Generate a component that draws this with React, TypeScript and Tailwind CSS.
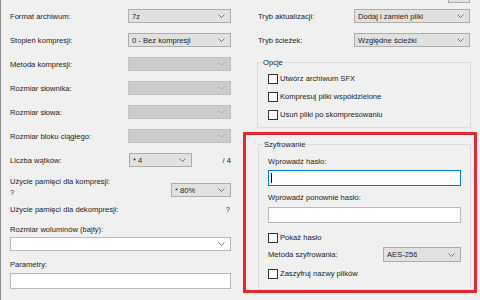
import React from "react";

type Tone = "normal" | "disabled" | "white";

const TONE: Record<Tone, string> = {
  normal: "bg-[#e1e1e1] border-[#adadad]",
  disabled: "bg-[#cccccc] border-[#c4c4c4]",
  white: "bg-white border-[#b9b9b9]",
};

function Chevron({ dim }: { dim?: boolean }) {
  return (
    <svg width="7" height="4" viewBox="0 0 7 4" className={dim ? "stroke-[#a8a8a8]" : "stroke-[#5a5a5a]"}>
      <path d="M0.5 0.5 L3.5 3.5 L6.5 0.5" fill="none" strokeWidth="0.8" />
    </svg>
  );
}

function Combo({ value, w, tone = "normal", h = "h-[14px]" }: { value?: string; w: string; tone?: Tone; h?: string }) {
  return (
    <div className={`${w} ${h} ${TONE[tone]} border flex items-center justify-between pl-[3px] pr-[5px] shrink-0`}>
      <span className="truncate">{value}</span>
      <Chevron dim={tone === "disabled"} />
    </div>
  );
}

function Row({ label, children }: { label: string; children: React.ReactNode }) {
  return (
    <div className="flex items-center justify-between h-[14px]">
      <span>{label}</span>
      {children}
    </div>
  );
}

function Check({ label }: { label: string }) {
  return (
    <div className="flex items-center gap-[2px] h-[11px]">
      <div className="w-[10px] h-[10px] border border-[#333333] bg-white" />
      <span>{label}</span>
    </div>
  );
}

export default function App() {
  return (
    <div className="w-[480px] h-[300px] overflow-hidden flex bg-[#f0f0f0] border-l border-[#8c8c8c] text-[7.6px] leading-[11px] text-[#1c1c1c] font-['Liberation_Sans',Arial,sans-serif]">
      {/* Left column */}
      <div className="w-[230px] shrink-0 pl-[9px] pt-[9px] flex flex-col">
        <div className="flex flex-col gap-[10px]">
          <Row label="Format archiwum:">
            <Combo value="7z" w="w-[103px]" />
          </Row>
          <Row label="Stopień kompresji:">
            <Combo value="0 - Bez kompresji" w="w-[103px]" />
          </Row>
          <Row label="Metoda kompresji:">
            <Combo w="w-[103px]" tone="disabled" />
          </Row>
          <Row label="Rozmiar słownika:">
            <Combo w="w-[103px]" tone="disabled" />
          </Row>
          <Row label="Rozmiar słowa:">
            <Combo w="w-[103px]" tone="disabled" />
          </Row>
          <Row label="Rozmiar bloku ciągłego:">
            <Combo w="w-[103px]" tone="disabled" />
          </Row>
          <div className="flex items-center h-[14px]">
            <span className="w-[119px]">Liczba wątków:</span>
            <Combo value="* 4" w="w-[63px]" />
            <span className="ml-auto">/ 4</span>
          </div>
        </div>
        <div className="flex items-start justify-between mt-[9px]">
          <span className="leading-[11px]">
            Użycie pamięci dla kompresji:
            <br />?
          </span>
          <div className="mt-[7px]">
            <Combo value="* 80%" w="w-[60px]" />
          </div>
        </div>
        <div className="flex justify-between mt-[6px]">
          <span>Użycie pamięci dla dekompresji:</span>
          <span className="pr-[1px]">?</span>
        </div>
        <span className="mt-[9px]">Rozmiar woluminów (bajty):</span>
        <div className="mt-[2px]">
          <Combo w="w-full" tone="white" />
        </div>
        <span className="mt-[8px]">Parametry:</span>
        <div className="mt-[3px] h-[16px] bg-white border border-[#b9b9b9]" />
      </div>

      <div className="w-[12px] shrink-0" />

      {/* Right column */}
      <div className="w-[237px] shrink-0 flex flex-col">
        <div className="h-[3px] flex justify-end pr-[10px]">
          <div className="w-[22px] h-[3px] bg-[#e1e1e1] border-x border-b border-[#adadad]" />
        </div>
        <div className="ml-[15px] w-[212px] mt-[6px] flex flex-col gap-[10px]">
          <Row label="Tryb aktualizacji:">
            <Combo value="Dodaj i zamień pliki" w="w-[116px]" />
          </Row>
          <Row label="Tryb ścieżek:">
            <Combo value="Względne ścieżki" w="w-[116px]" />
          </Row>
        </div>

        <fieldset className="ml-[14px] w-[214px] mt-[10px] h-[71px] border border-[#dcdcdc]">
          <legend className="ml-[4px] px-[1px]">Opcje</legend>
          <div className="pl-[10px] pt-[5px] flex flex-col gap-[7px]">
            <Check label="Utwórz archiwum SFX" />
            <Check label="Kompresuj pliki współdzielone" />
            <Check label="Usuń pliki po skompresowaniu" />
          </div>
        </fieldset>

        <div className="mt-[4px] w-[234px] h-[161px] border-[3px] border-[#e3262f] pl-[12px] pr-[5px] pt-[4px]">
          <fieldset className="w-[212px] h-[151px] border border-[#dcdcdc]">
            <legend className="ml-[4px] px-[1px]">Szyfrowanie</legend>
            <div className="px-[9px] flex flex-col">
              <span className="mt-[6px]">Wprowadź hasło:</span>
              <div className="mt-[3px] h-[16px] w-[193px] bg-white border border-[#0078d7] flex items-center pl-[2px]">
                <div className="w-px h-[10px] bg-black" />
              </div>
              <span className="mt-[6px]">Wprowadź ponownie hasło:</span>
              <div className="mt-[4px] h-[16px] w-[193px] bg-white border border-[#b9b9b9]" />
              <div className="mt-[9px]">
                <Check label="Pokaż hasło" />
              </div>
              <div className="mt-[4px] w-[193px] flex items-center justify-between">
                <span>Metoda szyfrowania:</span>
                <Combo value="AES-256" w="w-[78px]" h="h-[15px]" />
              </div>
              <div className="mt-[6px]">
                <Check label="Zaszyfruj nazwy plików" />
              </div>
            </div>
          </fieldset>
        </div>
      </div>
    </div>
  );
}
